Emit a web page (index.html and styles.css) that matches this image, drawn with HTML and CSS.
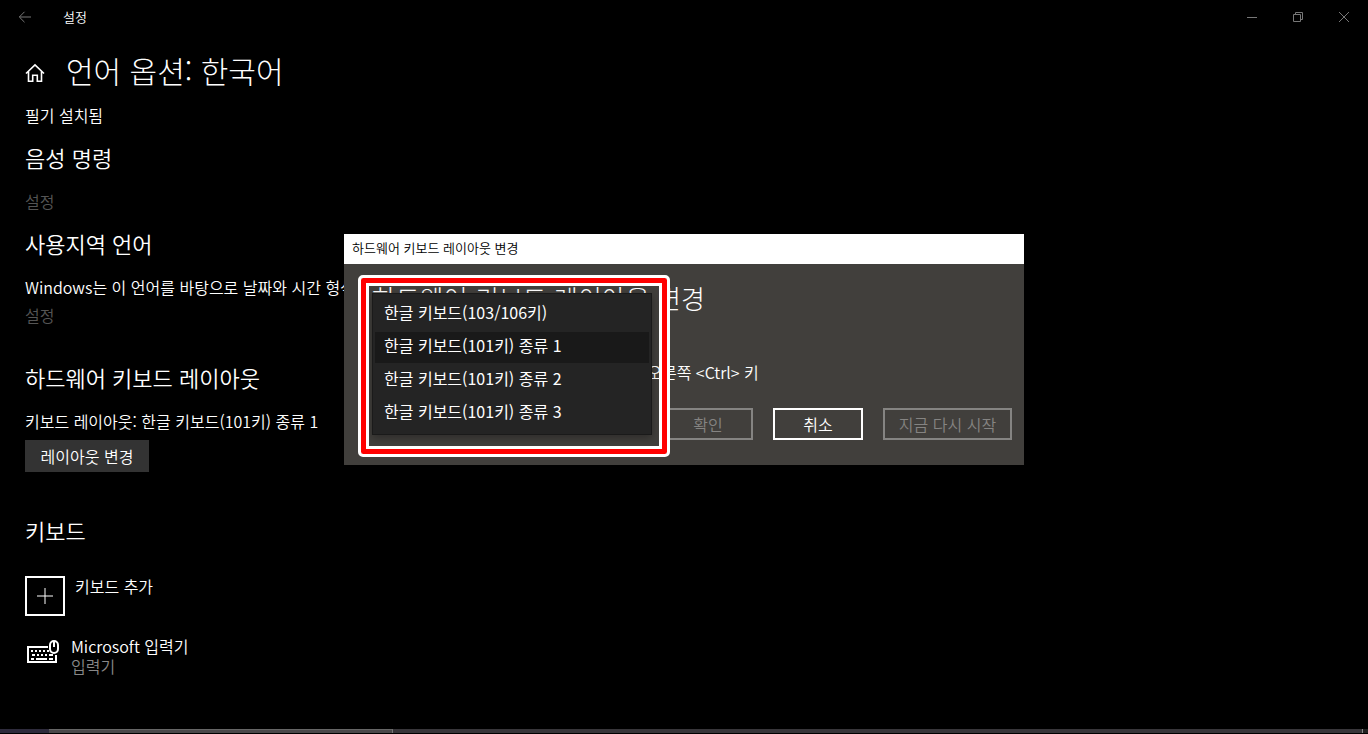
FILE: index.html
```html
<!DOCTYPE html>
<html lang="ko">
<head>
    <meta charset="UTF-8">
    <meta name="viewport" content="width=device-width, initial-scale=1.0">
    <title>설정</title>
    <link rel="stylesheet" href="styles.css">
</head>
<body>
    <header class="titlebar">
        <button class="titlebar-btn back" aria-label="뒤로">
            <svg width="14" height="12" viewBox="0 0 14 12"><path d="M13 6H1.500M6.500 .8L1.300 6l5.200 5.200"/></svg>
        </button>
        <span class="app-name">설정</span>
        <div class="window-controls">
            <button class="titlebar-btn" aria-label="최소화">
                <svg width="12" height="12" viewBox="0 0 12 12"><path d="M1 6.500h10"/></svg>
            </button>
            <button class="titlebar-btn" aria-label="이전 크기로">
                <svg width="12" height="12" viewBox="0 0 12 12"><path d="M1.500 3.500h7v7h-7zM3.500 3.500v-2h7v7h-2"/></svg>
            </button>
            <button class="titlebar-btn" aria-label="닫기">
                <svg width="12" height="12" viewBox="0 0 12 12"><path d="M1 1l10 10M11 1L1 11"/></svg>
            </button>
        </div>
    </header>

    <main class="content">
        <div class="page-title">
            <a href="#" class="home" aria-label="홈">
                <svg width="20" height="20" viewBox="0 0 20 20"><path d="M1 10.500L10 1.800l9 8.700M3.500 8.500v9.700h4.200v-6h4.600v6h4.200V8.500"/></svg>
            </a>
            <h1>언어 옵션: 한국어</h1>
        </div>
        <p>필기 설치됨</p>

        <section>
            <h2>음성 명령</h2>
            <a href="#" class="link-muted">설정</a>
        </section>

        <section>
            <h2>사용지역 언어</h2>
            <p>Windows는 이 언어를 바탕으로 날짜와 시간 형식을 지정합니다.</p>
            <a href="#" class="link-muted">설정</a>
        </section>

        <section class="hardware">
            <h2>하드웨어 키보드 레이아웃</h2>
            <p>키보드 레이아웃: 한글 키보드(101키) 종류 1</p>
            <button class="btn-layout">레이아웃 변경</button>
        </section>

        <section class="keyboards">
            <h2>키보드</h2>
            <button class="add-keyboard">
                <span class="plus-box">
                    <svg width="16" height="16" viewBox="0 0 16 16"><path d="M8 0v16M0 8h16"/></svg>
                </span>
                <span>키보드 추가</span>
            </button>
            <div class="keyboard-item">
                <svg class="keyboard-icon" width="34" height="26" viewBox="0 0 34 26">
                    <path class="outline" d="M22 8H2v15h28v-7"/>
                    <path class="keys" d="M5 12h2M9 12h2M13 12h2M17 12h2M21 12h2M6 16h3M11 16h2M15 16h2M19 16h2M23 16h4M5 20h3M10 20h11M23 20h4"/>
                    <rect class="outline" x="24" y="2" width="8" height="12" rx="4"/>
                    <path class="outline" d="M28 3v5"/>
                </svg>
                <div>
                    <div>Microsoft 입력기</div>
                    <div class="sub">입력기</div>
                </div>
            </div>
        </section>
    </main>

    <footer class="taskbar">
        <span class="task-start"></span>
        <span class="task-active"></span>
        <span class="task-rest"></span>
        <span class="task-end"></span>
    </footer>

    <div class="overlay">
        <div class="dialog" role="dialog" aria-labelledby="dialog-title">
            <div class="dialog-bar">하드웨어 키보드 레이아웃 변경</div>
            <div class="dialog-body">
                <h2 id="dialog-title">하드웨어 키보드 레이아웃 변경</h2>
                <p>한글/영문 전환: 오른쪽 &lt;Alt&gt; 키 한자 키: 오른쪽 &lt;Ctrl&gt; 키</p>
                <div class="dialog-actions">
                    <button disabled>확인</button>
                    <button>취소</button>
                    <button class="wide" disabled>지금 다시 시작</button>
                </div>
            </div>
            <select class="layout-menu" size="4" aria-label="키보드 레이아웃">
                <option>한글 키보드(103/106키)</option>
                <option selected>한글 키보드(101키) 종류 1</option>
                <option>한글 키보드(101키) 종류 2</option>
                <option>한글 키보드(101키) 종류 3</option>
            </select>
            <div class="highlight"></div>
        </div>
    </div>
</body>
</html>
```
FILE: styles.css
```css
* {
    box-sizing: border-box;
}
body {
    margin: 0;
    min-height: 100vh;
    display: flex;
    flex-direction: column;
    overflow: hidden;
    background-color: #000;
    color: #fff;
    font-family: "Noto Sans CJK KR", sans-serif;
    font-size: 16px;
    font-weight: 350;
    line-height: 20px;
}
h1, h2, p {
    margin: 0;
    font-weight: 350;
}
button, select {
    font: inherit;
    color: inherit;
    border: none;
    border-radius: 0;
    padding: 0;
    background: none;
}
svg {
    display: block;
    fill: none;
    stroke: #fff;
}

/* title bar */
.titlebar {
    display: flex;
    align-items: center;
    height: 34px;
    padding-right: 1px;
}
.titlebar-btn {
    display: flex;
    align-items: center;
    justify-content: center;
    width: 46px;
    height: 34px;
}
.titlebar-btn svg {
    stroke: #777;
}
.back {
    width: 50px;
}
.app-name {
    margin-left: 13px;
    font-size: 13px;
}
.window-controls {
    display: flex;
    margin-left: auto;
}

/* settings page */
.content {
    flex: 1;
    padding: 14px 25px 0;
}
.page-title {
    display: flex;
    align-items: center;
    gap: 21px;
    height: 44px;
    margin-bottom: 13px;
}
.home {
    padding-top: 5px;
}
.home svg {
    stroke-width: 1.6;
}
h1 {
    font-size: 30px;
    font-weight: 300;
    line-height: 44px;
}
.content h2 {
    font-size: 22px;
    line-height: 28px;
    margin-bottom: 20px;
}
.content section {
    margin-top: 18px;
}
.content .hardware {
    margin-top: 38px;
}
.content .keyboards {
    margin-top: 44px;
}
.link-muted {
    display: block;
    margin-top: 8px;
    color: #555;
    text-decoration: none;
}
.content h2 + .link-muted {
    margin-top: 0;
}
.btn-layout {
    display: block;
    width: 124px;
    height: 32px;
    margin-top: 9px;
    background-color: #333;
    line-height: 30px;
}
.add-keyboard {
    display: flex;
    gap: 10px;
    margin-top: 32px;
}
.plus-box {
    display: flex;
    align-items: center;
    justify-content: center;
    width: 40px;
    height: 40px;
    border: 2px solid #fff;
}
.keyboard-item {
    display: flex;
    gap: 11px;
    margin: 20px 0 0 1px;
}
.keyboard-icon {
    margin-top: 3px;
}
.keyboard-icon .outline,
.keyboard-icon .keys {
    stroke-width: 2;
}
.sub {
    color: #888;
}

/* strip of the taskbar along the bottom */
.taskbar {
    display: flex;
    height: 4px;
    margin-bottom: 1px;
}
.task-start {
    width: 49px;
    background-color: #2e2b3c;
}
.task-active {
    width: 344px;
    background-color: #4b494b;
    border-top: 1px solid #666;
    border-right: 1px solid #777;
}
.task-rest {
    flex: 1;
    background-color: #38363a;
}
.task-end {
    width: 6px;
    border-left: 1px solid #888;
    background-color: #222;
}

/* dialog */
.overlay {
    position: fixed;
    inset: 0;
    display: flex;
    align-items: center;
    justify-content: center;
    padding-bottom: 36px;
}
.dialog {
    position: relative;
    width: 680px;
    background-color: #413f3c;
}
.dialog-bar {
    height: 30px;
    padding: 0 8px;
    background-color: #fff;
    color: #000;
    font-size: 13px;
    line-height: 28px;
}
.dialog-body {
    padding: 15px 12px 25px 28px;
}
.dialog-body h2 {
    font-size: 26px;
    font-weight: 300;
    line-height: 38px;
    margin-bottom: 45px;
}
.dialog-body p {
    margin-bottom: 26px;
}
.dialog-actions {
    display: flex;
    justify-content: flex-end;
    gap: 20px;
}
.dialog-actions button {
    width: 90px;
    height: 32px;
    border: 2px solid #fff;
    line-height: 26px;
}
.dialog-actions button.wide {
    width: 129px;
}
.dialog-actions button:disabled {
    border-color: #858482;
    color: #858482;
}
.layout-menu {
    position: absolute;
    top: 59px;
    left: 28px;
    width: 280px;
    height: 142px;
    padding: 4px 2px;
    overflow: hidden;
    border: 1px solid #1a1a1a;
    background-color: #242424;
    outline: none;
    box-shadow: 0 3px 8px rgba(0, 0, 0, 0.3);
}
.layout-menu option {
    height: 31px;
    margin: 1px 0 2px;
    padding: 1px 9px 0;
    line-height: 30px;
    color: #fff;
}
.layout-menu option:checked {
    background: #191919 linear-gradient(#191919, #191919);
}
.highlight {
    position: absolute;
    top: 41px;
    left: 14px;
    width: 312px;
    height: 182px;
    border: 3px solid #fff;
    border-radius: 5px;
    box-shadow: inset 0 0 0 5px #f00, inset 0 0 0 8px #fff;
    pointer-events: none;
}
```
